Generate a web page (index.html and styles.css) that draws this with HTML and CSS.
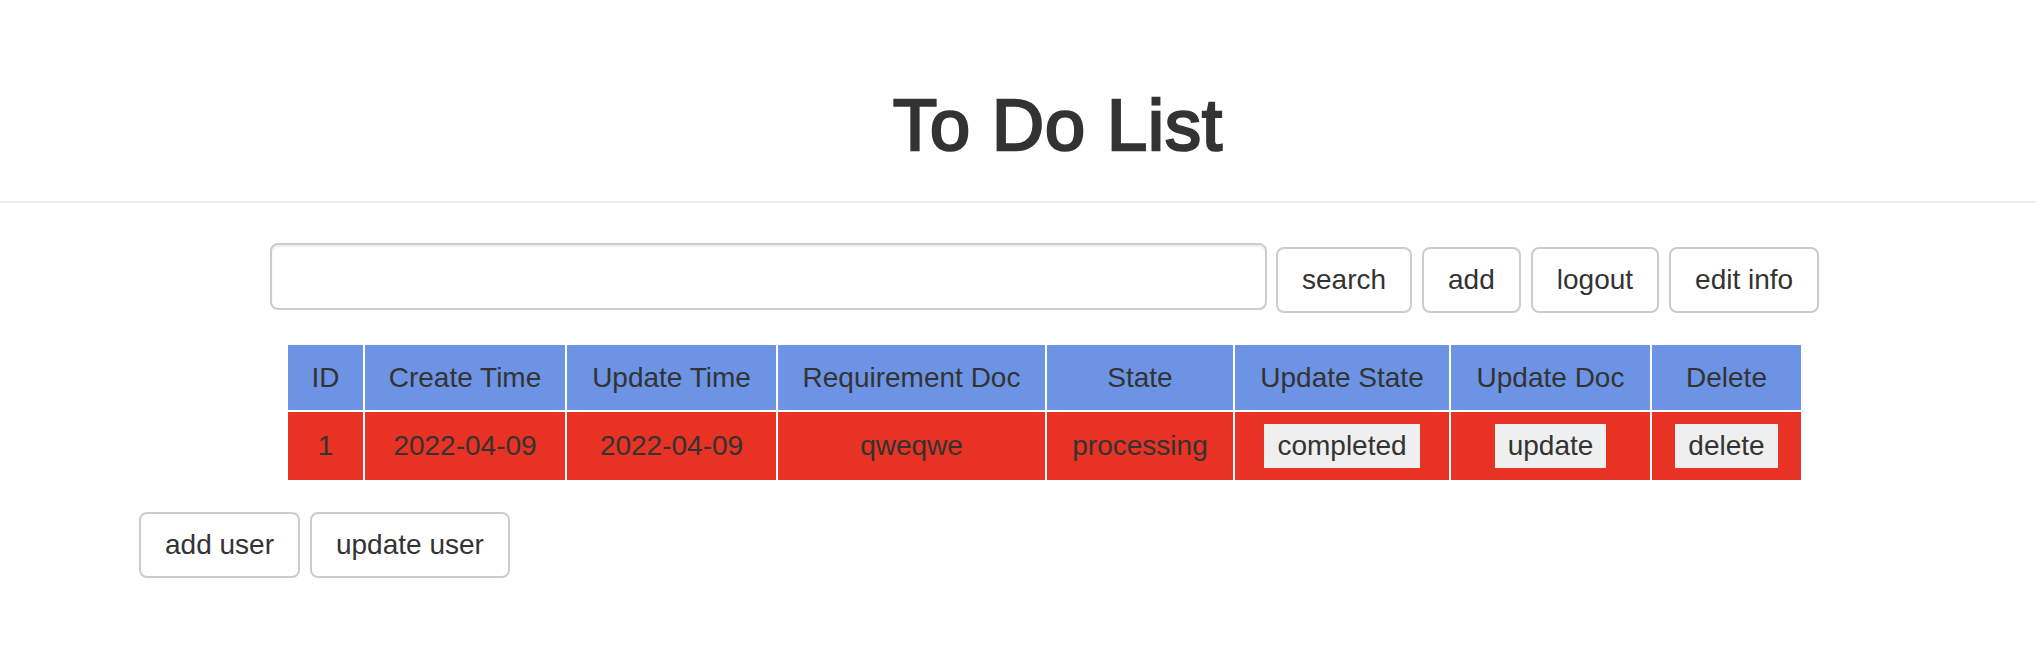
FILE: index.html
```html
<!DOCTYPE html>
<html>
<head>
<meta charset="utf-8">
<title>To Do List</title>
<link rel="stylesheet" href="styles.css">
</head>
<body>
<header class="page-header">
  <h1 class="title">To Do List</h1>
</header>
<main class="content">
  <div class="search-row">
    <input class="search-input" type="text">
    <div class="actions">
      <button class="btn">search</button>
      <button class="btn">add</button>
      <button class="btn">logout</button>
      <button class="btn">edit info</button>
    </div>
  </div>
  <table class="todo-table">
    <colgroup>
      <col class="c-id"><col class="c-create"><col class="c-update"><col class="c-doc"><col class="c-state"><col class="c-ustate"><col class="c-udoc"><col class="c-del">
    </colgroup>
    <thead>
      <tr>
        <th>ID</th><th>Create Time</th><th>Update Time</th><th>Requirement Doc</th><th>State</th><th>Update State</th><th>Update Doc</th><th>Delete</th>
      </tr>
    </thead>
    <tbody>
      <tr>
        <td>1</td><td>2022-04-09</td><td>2022-04-09</td><td>qweqwe</td><td>processing</td>
        <td><button class="cell-btn">completed</button></td>
        <td><button class="cell-btn">update</button></td>
        <td><button class="cell-btn">delete</button></td>
      </tr>
    </tbody>
  </table>
  <div class="user-row">
    <button class="btn">add user</button>
    <button class="btn">update user</button>
  </div>
</main>
</body>
</html>
```

FILE: styles.css
```css
* { box-sizing: border-box; }
html, body {
  margin: 0;
  padding: 0;
  background: #fff;
  color: #333;
  font-family: "Liberation Sans", Arial, Helvetica, sans-serif;
}
.page-header {
  padding: 85px 0 36px 80px;
  border-bottom: 2px solid #eee;
}
.title {
  margin: 0;
  font-size: 72px;
  line-height: 80px;
  font-weight: normal;
  letter-spacing: 1px;
  -webkit-text-stroke: 2.6px #333;
  text-align: center;
  color: #333;
}
.content {
  padding-top: 40px;
}
.search-row {
  display: flex;
  align-items: flex-start;
  margin-left: 270px;
  gap: 9px;
}
.search-input {
  width: 997px;
  height: 67px;
  border: 2px solid #ccc;
  border-radius: 8px;
  box-shadow: inset 0 2px 2px rgba(0,0,0,0.075);
  font-size: 28px;
  padding: 12px 24px;
  background: #fff;
}
.actions {
  display: flex;
  gap: 10px;
  margin-top: 4px;
}
.btn {
  font-family: "Liberation Sans", Arial, Helvetica, sans-serif;
  font-size: 28px;
  line-height: 38px;
  padding: 12px 24px;
  border: 2px solid #ccc;
  border-radius: 8px;
  background: #fff;
  color: #333;
  white-space: nowrap;
}
.todo-table {
  margin: 30px 0 0 286px;
  border-collapse: separate;
  border-spacing: 2px;
  table-layout: fixed;
  width: 1515px;
  font-size: 28px;
  color: #333;
}
.c-id { width: 75px; }
.c-create { width: 200px; }
.c-update { width: 209px; }
.c-doc { width: 267px; }
.c-state { width: 186px; }
.c-ustate { width: 214px; }
.c-udoc { width: 199px; }
.c-del { width: 149px; }
.todo-table th {
  background: #6d94e4;
  font-weight: normal;
  height: 65px;
  padding: 0;
  text-align: center;
  vertical-align: middle;
}
.todo-table td {
  background: #e83223;
  height: 68px;
  padding: 0;
  text-align: center;
  vertical-align: middle;
}
.cell-btn {
  font-family: "Liberation Sans", Arial, Helvetica, sans-serif;
  font-size: 28px;
  height: 44px;
  padding: 0 13px;
  border: 0;
  background: #efefef;
  color: #333;
  vertical-align: middle;
}
.user-row {
  display: flex;
  gap: 10px;
  margin: 30px 0 0 139px;
}
```
